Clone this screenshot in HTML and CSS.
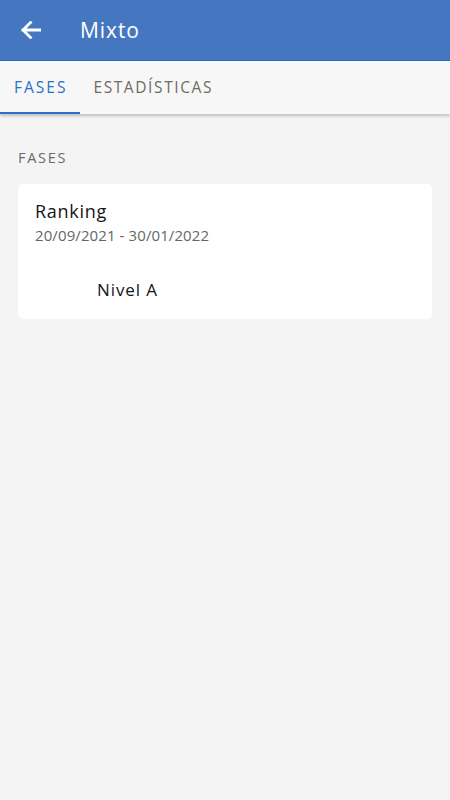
FILE: index.html
```html
<!DOCTYPE html>
<html lang="es">
<head>
<meta charset="utf-8">
<link rel="stylesheet" href="styles.css">
</head>
<body>
<header class="appbar">
  <svg class="back" width="20" height="18" viewBox="0 0 20 18"><path d="M2 9H19M9.5 1.5L2 9l7.5 7.5" fill="none" stroke="#fff" stroke-width="2.8" stroke-linecap="square"/></svg>
  <h1 class="title">Mixto</h1>
</header>
<nav class="tabs">
  <div class="tab active">FASES</div>
  <div class="tab">ESTADÍSTICAS</div>
</nav>
<main class="content">
  <div class="section-label">FASES</div>
  <div class="card">
    <div class="card-title">Ranking</div>
    <div class="card-dates">20/09/2021 - 30/01/2022</div>
    <div class="card-level">Nivel A</div>
  </div>
</main>
</body>
</html>
```
FILE: styles.css
```css
html, body { margin: 0; padding: 0; }
body {
  width: 450px; height: 800px; overflow: hidden;
  background: #f4f4f4;
  font-family: "Open Sans", "Noto Sans", sans-serif;
}
.appbar {
  height: 60px;
  background: #4577c1;
  border-bottom: 1px solid #1a6dd0;
  display: flex; align-items: center;
  padding-left: 21px;
  box-sizing: content-box;
}
.back { display: block; }
.title {
  margin: 0 0 0 39px;
  color: #fff; font-weight: 400; font-size: 21px;
  letter-spacing: 0.9px;
}
.tabs {
  height: 53px;
  background: #f7f7f7;
  display: flex;
  box-shadow: 0 2px 3px rgba(0,0,0,0.22);
  position: relative;
}
.tab {
  padding: 0 13px 0 13px;
  display: flex; align-items: center;
  font-size: 15.5px; letter-spacing: 1.6px;
  color: #6e6a66;
  border-bottom: 2px solid transparent;
}
.tab.active { color: #2a6fcb; border-bottom-color: #2a6fcb; padding: 0 13px 0 14px; letter-spacing: 2px; }
.content { padding: 36px 18px 0 18px; }
.section-label {
  font-size: 14.5px; color: #6b6b6b; letter-spacing: 1.7px;
  line-height: 16px;
  margin-bottom: 18px;
}
.card {
  background: #fff; border-radius: 5px;
  padding: 15px 17px 18px 17px;
  height: 102px;
}
.card-title { font-size: 18px; color: #151515; line-height: 24px; letter-spacing: 0.7px; }
.card-dates { font-size: 15px; color: #666; line-height: 24px; letter-spacing: 0.1px; }
.card-level { font-size: 17px; color: #151515; margin: 32px 0 0 62px; line-height: 22px; letter-spacing: 0.9px; }
```
